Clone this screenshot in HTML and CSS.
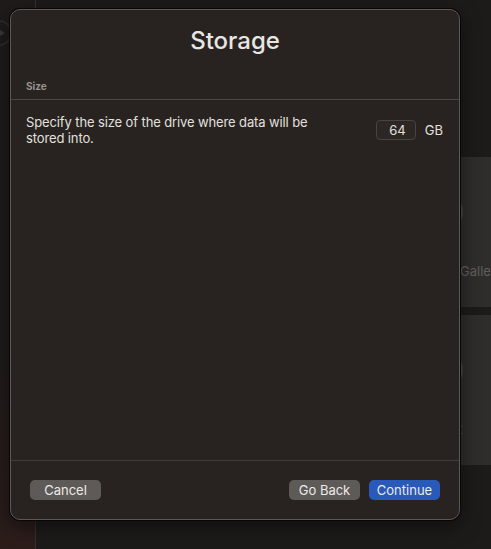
FILE: index.html
```html
<!DOCTYPE html>
<html lang="en">
<head>
    <meta charset="UTF-8">
    <meta name="viewport" content="width=device-width, initial-scale=1.0">
    <title>Storage</title>
    <link rel="stylesheet" href="styles.css">
</head>
<body>

    <div class="app">
        <aside class="sidebar">
            <div class="play-btn">
                <svg width="10" height="12" viewBox="0 0 10 12"><path d="M1 1 L9 6 L1 11 Z" fill="#3a3735"/></svg>
            </div>
        </aside>

        <main class="content">
            <div class="card">
                <div class="card-icon"></div>
                <div class="card-label">Gallery</div>
            </div>
            <div class="card">
                <div class="card-icon"></div>
                <div class="card-label card-label-end">Text</div>
            </div>
        </main>
    </div>

    <!-- Storage sheet -->
    <div class="dialog">
        <h1 class="dialog-title">Storage</h1>

        <div class="section-label">Size</div>

        <div class="dialog-body">
            <div class="size-row">
                <p class="size-text">Specify the size of the drive where data will be stored into.</p>
                <div class="size-input">64</div>
                <span class="size-unit">GB</span>
            </div>
        </div>

        <div class="dialog-footer">
            <button class="btn">Cancel</button>
            <div class="spacer"></div>
            <button class="btn">Go Back</button>
            <button class="btn btn-primary">Continue</button>
        </div>
    </div>

</body>
</html>
```

FILE: styles.css
```css
body {
    margin: 0;
    padding: 0;
    font-family: Inter, "Liberation Sans", sans-serif;
    background-color: rgb(29, 27, 26);
    color: rgb(226, 224, 222);
    width: 491px;
    height: 549px;
    overflow: hidden;
}

.app {
    display: flex;
    height: 549px;
}

.sidebar {
    width: 35px;
    border-right: 1px solid rgb(52, 49, 47);
    background: linear-gradient(rgb(30, 27, 26) 60%, rgb(44, 29, 27));
    padding-top: 20px;
}

.play-btn {
    width: 26px;
    height: 26px;
    margin-left: -14px;
    border: 2px solid rgb(44, 42, 40);
    border-radius: 50%;
    display: flex;
    align-items: center;
    justify-content: center;
    padding-left: 4px;
    box-sizing: border-box;
}

.content {
    flex: 1;
    padding: 157px 0 0 60px;
    display: flex;
    flex-direction: column;
    gap: 8px;
    background-color: rgb(29, 27, 26);
}

.card {
    height: 150px;
    background-color: rgb(46, 45, 44);
    position: relative;
    overflow: hidden;
}

.card-icon {
    position: absolute;
    left: 329px;
    top: 36px;
    width: 34px;
    height: 34px;
    border: 2px solid rgb(72, 70, 68);
    border-radius: 50%;
}

.card-label {
    position: absolute;
    left: 364px;
    top: 106px;
    font-size: 13px;
    color: rgb(96, 94, 92);
    white-space: nowrap;
}

.card-label-end {
    left: 340px;
}

/* Storage sheet */
.dialog {
    position: absolute;
    left: 10px;
    top: 9px;
    width: 448px;
    height: 509px;
    background-color: rgb(40, 35, 32);
    border: 1px solid rgb(92, 88, 86);
    border-radius: 10px;
    box-shadow: 0 0 0 1px rgb(8, 7, 6), 0 6px 20px rgba(0, 0, 0, 0.5);
    display: flex;
    flex-direction: column;
}

.dialog-title {
    margin: 16px 0 0 0;
    font-size: 24px;
    line-height: 30px;
    font-weight: 500;
    text-align: center;
    color: rgb(232, 230, 228);
}

.section-label {
    margin-top: 24px;
    padding: 0 15px 7px 15px;
    font-size: 10px;
    line-height: 12px;
    font-weight: 700;
    color: rgb(150, 146, 143);
    border-bottom: 1px solid rgb(74, 70, 67);
}

.dialog-body {
    flex: 1;
    padding: 14px 16px 0 15px;
}

.size-row {
    display: flex;
    align-items: flex-start;
}

.size-text {
    margin: 0;
    width: 300px;
    font-size: 13px;
    line-height: 16px;
    letter-spacing: -0.12px;
    color: rgb(226, 224, 222);
}

.size-input {
    margin: 6px 0 0 auto;
    width: 40px;
    height: 20px;
    box-sizing: border-box;
    border: 1px solid rgb(72, 68, 65);
    border-radius: 4px;
    background-color: rgb(44, 39, 36);
    font-size: 13px;
    line-height: 18px;
    text-align: right;
    padding-right: 9px;
}

.size-unit {
    margin: 8px 0 0 9px;
    font-size: 13px;
    line-height: 16px;
}

.dialog-footer {
    display: flex;
    align-items: center;
    gap: 9px;
    padding: 19px 19px 19px 19px;
    border-top: 1px solid rgb(64, 60, 57);
}

.spacer {
    flex: 1;
}

.btn {
    width: 71px;
    height: 20px;
    padding: 0;
    border: none;
    border-radius: 5px;
    background-color: rgb(94, 90, 88);
    color: rgb(236, 234, 232);
    font-family: Inter, "Liberation Sans", sans-serif;
    font-size: 13px;
    line-height: 20px;
}

.btn-primary {
    background-color: rgb(41, 89, 185);
}
```
